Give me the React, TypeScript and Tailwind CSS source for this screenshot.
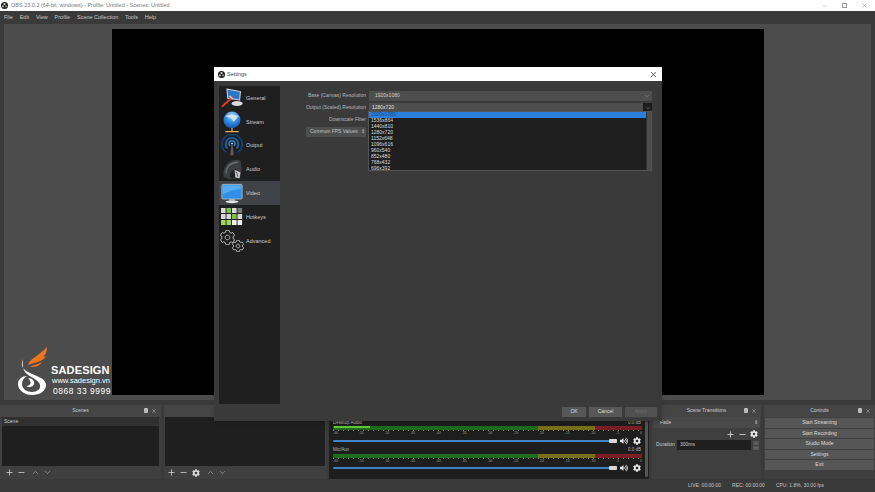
import { ChevronDown, ChevronUp, Minus, Plus, X } from "lucide-react";
import { FaCog, FaVolumeUp } from "react-icons/fa";

const MENU = ["File", "Edit", "View", "Profile", "Scene Collection", "Tools", "Help"];
const RESOLUTIONS = ["1536x864", "1440x810", "1280x720", "1152x648", "1096x616", "960x540", "852x480", "768x432", "696x392"];
const CONTROLS = ["Start Streaming", "Start Recording", "Studio Mode", "Settings", "Exit"];
const TICKS = ["-60", "-55", "-50", "-45", "-40", "-35", "-30", "-25", "-20", "-15", "-10", "-5", "0"];

const ObsLogo = ({ size }: { size: number }) => (
  <svg width={size} height={size} viewBox="0 0 20 20" className="shrink-0">
    <circle cx="10" cy="10" r="10" fill="#1c1c1c" />
    <circle cx="10" cy="5.8" r="3.2" fill="#e6e6e6" />
    <circle cx="5.6" cy="12.4" r="3.2" fill="#bdbdbd" />
    <circle cx="14.4" cy="12.4" r="3.2" fill="#8f8f8f" />
    <circle cx="10" cy="10" r="2.2" fill="#1c1c1c" />
  </svg>
);

const DockHeader = ({ title }: { title: string }) => (
  <div className="h-[12px] bg-[#454545] flex items-center relative shrink-0">
    <span className="flex-1 text-center text-[5px] text-[#cfcfcf]">{title}</span>
    <div className="absolute right-[4px] top-[3px] flex gap-[3px]">
      <span className="w-[4px] h-[5px] bg-[#bbbbbb] rounded-[1px]" />
      <X size={6} className="text-[#bbbbbb]" />
    </div>
  </div>
);

const GeneralIcon = () => (
  <svg width="22" height="21" viewBox="0 0 26 24">
    <path d="M7 2 L23 5 L22 15 L8 13 Z" fill="#2a76c9" stroke="#d7d7d7" strokeWidth="1.2" />
    <ellipse cx="19" cy="19" rx="6.5" ry="3" fill="#dcdcdc" />
    <path d="M2 22 L13 12" stroke="#d23a26" strokeWidth="2.6" strokeLinecap="round" />
    <path d="M10 10 L14 14" stroke="#bfc4c9" strokeWidth="2" />
  </svg>
);

const StreamIcon = () => (
  <svg width="22" height="22" viewBox="0 0 26 26">
    <defs>
      <radialGradient id="globe" cx="50%" cy="25%" r="75%">
        <stop offset="0%" stopColor="#a9d4f5" />
        <stop offset="55%" stopColor="#2f8ae0" />
        <stop offset="100%" stopColor="#0f56b0" />
      </radialGradient>
    </defs>
    <circle cx="13" cy="10.5" r="10" fill="url(#globe)" />
    <path d="M5 6 Q13 2 21 6 L15 13 L12 9 Z" fill="#dcebf6" opacity="0.85" />
    <path d="M13 20 V24 M5 24.5 H21" stroke="#e2b25a" strokeWidth="1.5" />
  </svg>
);

const OutputIcon = () => (
  <svg width="22" height="22" viewBox="0 0 26 26" fill="none">
    <path d="M6 22 A12 12 0 1 1 20 22" stroke="#123f6e" strokeWidth="2.2" />
    <path d="M7.5 17 A7.5 7.5 0 1 1 18.5 17" stroke="#1a6bb0" strokeWidth="2" />
    <path d="M10.5 14 A3.6 3.6 0 1 1 15.5 14" stroke="#2f8fdc" strokeWidth="1.6" />
    <path d="M11 25 L12.5 11 H13.5 L15 25 Z" fill="#5c5c5c" />
    <circle cx="13" cy="11" r="1.1" fill="#cfe6f7" />
  </svg>
);

const AudioIcon = () => (
  <svg width="22" height="22" viewBox="0 0 26 26" fill="none">
    <path d="M3 22 C1 10 9 1 22 2 C25 8 25 16 22 23 C16 26 8 26 3 22 Z" fill="#3c3f42" />
    <path d="M6 18 C6 10 12 5 20 5" stroke="#6b6f73" strokeWidth="1.6" />
    <path d="M11 23 C9 18 13 14 18 13 L20 22 C17 25 13 25 11 23 Z" fill="#1f2123" />
    <path d="M16 14 L23 17 L22 24 L17 23 Z" fill="#c9c9c9" />
    <path d="M18 16 L20 22" stroke="#4a4a4a" strokeWidth="1" />
  </svg>
);

const VideoIcon = () => (
  <svg width="22" height="21" viewBox="0 0 24 22">
    <rect x="1" y="1" width="22" height="16" rx="1" fill="#2f8fe6" stroke="#a9b4bc" strokeWidth="1" />
    <path d="M2 2 H22 V6 Q10 7 2 12 Z" fill="#6cc0f7" opacity="0.6" />
    <rect x="9" y="17" width="6" height="2" fill="#a9b4bc" />
    <ellipse cx="12" cy="20" rx="7" ry="1.5" fill="#dfe3e6" />
  </svg>
);

const HotkeysIcon = () => {
  const keys = ["#d8d8d8", "#7fc241", "#d8d8d8", "#7a7a7a", "#d8d8d8", "#d8d8d8", "#7fc241", "#d8d8d8", "#9fd65d", "#9fd65d", "#eeeeee", "#eeeeee"];
  return (
    <svg width="22" height="18" viewBox="0 0 22 18">
      {keys.map((fill, i) => (
        <rect key={i} x={(i % 4) * 5.5} y={Math.floor(i / 4) * 6} width="4.6" height="5" fill={fill} />
      ))}
    </svg>
  );
};

const AdvancedIcon = () => (
  <div className="relative w-[24px] h-[22px]">
    <FaCog size={15} className="text-[#1b1b1b] absolute left-0 top-0 [stroke:#d0d0d0] [stroke-width:30]" />
    <FaCog size={12} className="text-[#1b1b1b] absolute right-0 bottom-0 [stroke:#d0d0d0] [stroke-width:35]" />
  </div>
);

const NAV = [
  { label: "General", icon: <GeneralIcon /> },
  { label: "Stream", icon: <StreamIcon /> },
  { label: "Output", icon: <OutputIcon /> },
  { label: "Audio", icon: <AudioIcon /> },
  { label: "Video", icon: <VideoIcon />, active: true },
  { label: "Hotkeys", icon: <HotkeysIcon /> },
  { label: "Advanced", icon: <AdvancedIcon /> },
];

const Track = ({ name, level, peak }: { name: string; level: string; peak?: boolean }) => (
  <div className="h-[27.5px] shrink-0">
    <div className="flex justify-between pl-[4px] pr-[8px] h-[6px] items-center text-[4.5px] text-[#b5b5b5]">
      <span>{name}</span>
      <span>{level}</span>
    </div>
    <div className="ml-[4px] mr-[7px] h-[4px] flex relative">
      <div className="w-[205px] bg-[#1f6b1f]" />
      <div className="w-[57px] bg-[#77701c]" />
      <div className="flex-1 bg-[#7a1e24]" />
      {peak && <div className="absolute left-[1px] top-0 w-[36px] h-[2px] bg-[#62c83f]" />}
    </div>
    <div className="ml-[4px] mr-[7px] h-[1px] bg-[repeating-linear-gradient(90deg,#7f8f5c_0,#7f8f5c_1px,transparent_1px,transparent_5px)]" />
    <div className="ml-[4px] mr-[7px] flex justify-between text-[3.5px] leading-[4px] text-[#999999]">
      {TICKS.map((t) => (
        <span key={t}>{t}</span>
      ))}
    </div>
    <div className="flex items-center pl-[4px] pr-[8px] mt-[1.5px] gap-[3px] h-[8px]">
      <div className="flex-1 h-[2px] bg-[#3f83c9] rounded-full relative">
        <div className="absolute right-0 -top-[1px] w-[8px] h-[4px] bg-[#d8d8d8] rounded-[1px]" />
      </div>
      <FaVolumeUp size={8} className="text-[#e8e8e8]" />
      <FaCog size={8} className="text-[#e8e8e8] ml-[2px]" />
    </div>
  </div>
);

const SadesignLogo = () => (
  <div className="absolute left-[15px] top-[347px] flex items-end">
    <svg width="36" height="50" viewBox="0 0 36 50">
      <path d="M13 18 C14 12 24 9 32 0 C32 5 30 8 28 10 C29 10 30 9 31 9 C28 15 20 15 13 18 Z" fill="#ee7420" />
      <path d="M15 20 C20 17 24 17 27 15 C24 20 19 20 15 20 Z" fill="#ee7420" />
      <path d="M8 12 C5 19 8 23 15 26 C24 30 31 32 31 38 C31 44 25 48 17 48 C9 48 3 43 3 37 C3 32 7 29 12 29 C9 31 7 33 7 37 C7 42 12 45 17 45 C22 45 26 42 25 38 C24 33 17 31 12 27 C8 24 7 18 8 12 Z" fill="#ffffff" />
      <path d="M13 31 C17 31 20 34 19 37 C18 40 14 41 11 39 C14 39 16 37 15.5 35 C15 33 14 32 13 31 Z" fill="#ffffff" />
    </svg>
    <div className="flex flex-col mb-[1px] text-white">
      <span className="text-[11px] leading-[12px] font-bold tracking-[0.15px]">SADESIGN</span>
      <span className="text-[7.5px] leading-[10px] ml-[1px]">www.sadesign.vn</span>
      <span className="text-[8.5px] leading-[10px] ml-[2px] tracking-[0.5px]">0868 33 9999</span>
    </div>
  </div>
);

const SettingsDialog = () => (
  <div className="absolute left-[214px] top-[67px] w-[448px] h-[354px] bg-[#3a3a3a] flex flex-col shadow-md">
    <div className="h-[14px] bg-white flex items-center pl-[4px] pr-[4px] gap-[2px] shrink-0">
      <ObsLogo size={7} />
      <span className="flex-1 text-[5.5px] text-[#444444]">Settings</span>
      <X size={9} className="text-[#333333]" />
    </div>
    <div className="flex-1 flex pl-[5px] pt-[5px] pr-[10px] pb-[17px]">
      <div className="w-[61px] bg-[#1f1f1f] flex flex-col shrink-0">
        {NAV.map((n) => (
          <div key={n.label} className={`h-[23.8px] flex items-center gap-[2px] pl-[1px] ${n.active ? "bg-[#3f4246]" : ""}`}>
            <div className="w-[24px] flex justify-center">{n.icon}</div>
            <span className="text-[5.5px] text-[#cccccc]">{n.label}</span>
          </div>
        ))}
      </div>
      <div className="flex-1 pl-[26px] pt-[5px] relative">
        <div className="flex flex-col gap-[2px] text-[5px]">
          <div className="flex items-center h-[10px]">
            <span className="w-[60px] mr-[3px] text-right whitespace-nowrap text-[#b8b8b8] flex justify-end">Base (Canvas) Resolution</span>
            <div className="flex-1 h-[10px] bg-[#4e4e4e] flex items-center pl-[6px] text-[#cfcfcf] justify-between">
              <span>1920x1080</span>
              <ChevronDown size={6} className="text-[#999999] mr-[2px]" />
            </div>
          </div>
          <div className="flex items-center h-[10px]">
            <span className="w-[60px] mr-[3px] whitespace-nowrap text-[#b8b8b8] flex justify-end">Output (Scaled) Resolution</span>
            <div className="flex-1 h-[10px] bg-[#4e4e4e] flex items-center pl-[3px] text-[#e0e0e0] justify-between">
              <span>1280x720</span>
              <span className="w-[9px] h-[10px] bg-[#1c1c1c] flex items-center justify-center">
                <ChevronDown size={6} className="text-[#aaaaaa]" />
              </span>
            </div>
          </div>
          <div className="flex items-center h-[10px]">
            <span className="w-[60px] mr-[3px] whitespace-nowrap text-[#b8b8b8] flex justify-end">Downscale Filter</span>
          </div>
          <div className="h-[10px] w-[60px] bg-[#4e4e4e] flex items-center pl-[4px] text-[#c4c4c4] justify-between pr-[1px] whitespace-nowrap">
            <span>Common FPS Values</span>
            <span>⇕</span>
          </div>
        </div>
        {/* open combobox list */}
        <div className="absolute left-[88px] top-[25px] w-[284px] h-[60px] bg-[#1e1e1e] border border-[#555555] flex">
          <div className="flex-1 flex flex-col text-[5px] text-[#dddddd]">
            <div className="h-[6px] bg-[#2a7fdc] flex items-center pl-[2px] text-[#1d4a7c]">1920x1080</div>
            {RESOLUTIONS.map((r) => (
              <div key={r} className="h-[6px] flex items-center pl-[2px]">{r}</div>
            ))}
          </div>
          <div className="w-[5px] bg-[#4c4c4c] border-l border-[#333333]" />
        </div>
      </div>
    </div>
    <div className="absolute right-[5px] bottom-[4px] flex gap-[3px] text-[5px]">
      <div className="w-[24px] h-[10px] bg-[#575757] flex items-center justify-center text-[#dddddd]">OK</div>
      <div className="w-[33px] h-[10px] bg-[#575757] flex items-center justify-center text-[#dddddd]">Cancel</div>
      <div className="w-[32px] h-[10px] bg-[#515151] flex items-center justify-center text-[#6e6e6e]">Apply</div>
    </div>
  </div>
);

export default function App() {
  return (
    <div className="w-[875px] h-[492px] relative overflow-hidden bg-[#3a3a3a] flex flex-col font-['Liberation_Sans',Arial,sans-serif]">
      <div className="h-[11px] bg-white flex items-center pl-[1px] gap-[3px] shrink-0">
        <ObsLogo size={7} />
        <span className="flex-1 text-[5.5px] text-[#777777]">OBS 23.0.2 (64-bit, windows) - Profile: Untitled - Scenes: Untitled</span>
        <div className="flex items-center gap-[14px] pr-[7px]">
          <Minus size={6} className="text-[#aaaaaa]" />
          <span className="w-[5px] h-[5px] border border-[#999999]" />
          <X size={7} className="text-[#999999]" />
        </div>
      </div>
      <div className="h-[13px] bg-[#3a3a3a] flex items-center pl-[4px] gap-[6.8px] text-[5.5px] text-[#c8c8c8] shrink-0">
        {MENU.map((m) => (
          <span key={m}>{m}</span>
        ))}
      </div>
      <div className="h-[376px] mx-[4px] bg-[#4c4c4c] flex justify-center pt-[5px] shrink-0">
        <div className="w-[652px] h-[366px] bg-black" />
      </div>
      <div className="flex-1 flex gap-[3px] pt-[5px] text-[#cccccc]">
        <div className="w-[161px] h-[74px] flex flex-col bg-[#3f3f3f]">
          <DockHeader title="Scenes" />
          <div className="h-[49px] mx-[2px] bg-[#1f1f1f]">
            <div className="h-[9px] bg-[#303030] pl-[2px] text-[5px] leading-[9px]">Scene</div>
          </div>
          <div className="flex-1 flex items-center pl-[4.5px] gap-[3px] text-[#d8d8d8]">
            <Plus size={9} />
            <Minus size={9} />
            <ChevronUp size={9} className="ml-[2px] text-[#999999]" />
            <ChevronDown size={9} className="text-[#999999]" />
          </div>
        </div>
        <div className="w-[162px] h-[74px] flex flex-col bg-[#3f3f3f]">
          <DockHeader title="Sources" />
          <div className="h-[49px] mx-[1px] bg-[#1f1f1f]" />
          <div className="flex-1 flex items-center pl-[3px] gap-[3px] text-[#d8d8d8]">
            <Plus size={9} />
            <Minus size={9} />
            <span className="w-[9px] flex justify-center">
              <FaCog size={8} />
            </span>
            <ChevronUp size={9} className="ml-[3px] text-[#999999]" />
            <ChevronDown size={9} className="text-[#999999]" />
          </div>
        </div>
        <div className="w-[320px] h-[74px] flex flex-col bg-[#3f3f3f]">
          <DockHeader title="Audio Mixer" />
          <div className="flex-1 bg-[#1e1e1e] flex flex-col pt-[3px] relative">
            <Track name="Desktop Audio" level="0.0 dB" peak />
            <Track name="Mic/Aux" level="0.0 dB" />
            <div className="absolute right-[1px] top-[4px] bottom-[2px] w-[3px] bg-[#555555] rounded-full" />
          </div>
        </div>
        <div className="w-[109px] h-[74px] flex flex-col bg-[#3f3f3f]">
          <DockHeader title="Scene Transitions" />
          <div className="h-[11px] mx-[1px] bg-[#4a4a4a] flex items-center pl-[7px] pr-[2px] text-[5px] justify-between">
            <span>Fade</span>
            <span>⇕</span>
          </div>
          <div className="h-[12px] flex items-center justify-end pr-[3px] gap-[3px] text-[#e8e8e8]">
            <Plus size={9} />
            <Minus size={9} />
            <FaCog size={8} />
          </div>
          <div className="flex items-center pl-[4px] pr-[2px] gap-[2px] text-[5px]">
            <span className="whitespace-nowrap">Duration</span>
            <div className="flex-1 h-[10px] bg-[#1f1f1f] flex items-center pl-[3px]">300ms</div>
            <div className="flex flex-col w-[6px] gap-[1px]">
              <div className="h-[4px] bg-[#555555] flex items-center justify-center">
                <ChevronUp size={4} />
              </div>
              <div className="h-[4px] bg-[#555555] flex items-center justify-center">
                <ChevronDown size={4} />
              </div>
            </div>
          </div>
        </div>
        <div className="flex-1 h-[74px] flex flex-col bg-[#3f3f3f]">
          <DockHeader title="Controls" />
          <div className="flex flex-col gap-[1px] pt-[1px] px-[1px]">
            {CONTROLS.map((c) => (
              <div key={c} className="h-[9.5px] bg-[#565656] flex items-center justify-center text-[5px] text-[#dddddd]">{c}</div>
            ))}
          </div>
        </div>
      </div>
      <div className="h-[12px] flex items-center justify-end pr-[51px] gap-[11px] text-[5px] text-[#c4c4c4] shrink-0">
        <span>LIVE: 00:00:00</span>
        <span>REC: 00:00:00</span>
        <span>CPU: 1.8%, 30.00 fps</span>
      </div>
      <SettingsDialog />
      <SadesignLogo />
    </div>
  );
}
